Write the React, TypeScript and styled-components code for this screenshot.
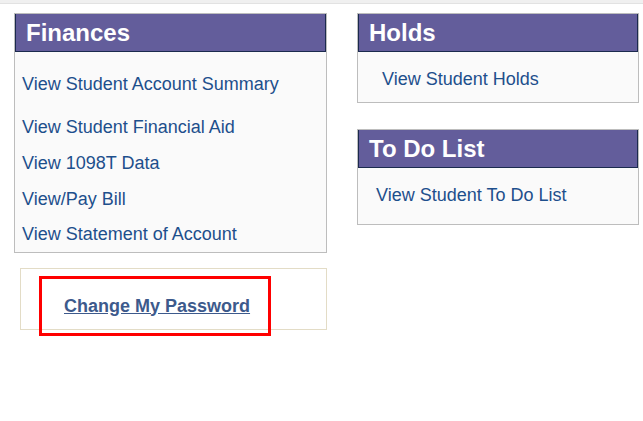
import styled, { createGlobalStyle } from 'styled-components';

const GlobalStyle = createGlobalStyle`
    body {
        margin: 0;
        background: #ffffff;
        font-family: 'Liberation Sans', Arial, sans-serif;
    }
`;

const Screen = styled.div`
    min-height: 421px;
`;

const TopStrip = styled.div`
    height: 3px;
    background: #f0f0f0;
    border-bottom: 1px solid #e2e2e2;
`;

const Page = styled.div`
    display: flex;
    align-items: flex-start;
    gap: 30px;
    padding: 9px 0 0 14px;
`;

const Column = styled.div<{ width: number; gap?: number }>`
    display: flex;
    flex-direction: column;
    width: ${props => props.width}px;
    gap: ${props => props.gap || 0}px;
`;

const Card = styled.section`
    border: 1px solid #bdbdbd;
    background: #fafafa;
`;

const CardHeader = styled.h2`
    margin: 0;
    height: 37px;
    display: flex;
    align-items: center;
    padding-left: 10px;
    background: #635d9b;
    border: 1px solid #1b2a4e;
    border-top: 0;
    color: #ffffff;
    font-size: 24px;
    font-weight: bold;
`;

const CardBody = styled.div<{ padding: string }>`
    display: flex;
    flex-direction: column;
    padding: ${props => props.padding};
`;

const Item = styled.a<{ height?: number; spaceAfter?: number }>`
    display: flex;
    align-items: center;
    height: ${props => props.height || 36}px;
    margin-bottom: ${props => props.spaceAfter || 0}px;
    color: #1d4f8c;
    font-size: 18px;
    text-decoration: none;
    cursor: pointer;
`;

const PasswordBox = styled.div`
    margin: 15px 0 0 6px;
    height: 62px;
    border: 1px solid #e3dcc6;
    display: flex;
    align-items: flex-start;
    padding: 7px 0 0 18px;
    box-sizing: border-box;
`;

// red annotation frame drawn over the password box edge
const Highlight = styled.div`
    box-sizing: border-box;
    width: 232px;
    height: 60px;
    flex-shrink: 0;
    border: 3px solid #ff0000;
    display: flex;
    align-items: center;
    padding: 0 0 0 22px;
`;

const PasswordLink = styled.a`
    color: #3d5a8c;
    font-size: 18px;
    font-weight: bold;
    text-decoration: underline;
    cursor: pointer;
`;

const financeLinks = [
    'View Student Financial Aid',
    'View 1098T Data',
    'View/Pay Bill',
    'View Statement of Account',
];

export default function App() {
    return (
        <Screen>
            <GlobalStyle />
            <TopStrip />
            <Page>
                <Column width={313}>
                    <Card>
                        <CardHeader>Finances</CardHeader>
                        <CardBody padding='14px 0 0 7px'>
                            <Item spaceAfter={7}>View Student Account Summary</Item>
                            {financeLinks.map(link => (
                                <Item key={link} height={link === 'View Statement of Account' ? 35 : 36}>
                                    {link}
                                </Item>
                            ))}
                        </CardBody>
                    </Card>
                    <PasswordBox>
                        <Highlight>
                            <PasswordLink>Change My Password</PasswordLink>
                        </Highlight>
                    </PasswordBox>
                </Column>
                <Column width={282} gap={26}>
                    <Card>
                        <CardHeader>Holds</CardHeader>
                        <CardBody padding='9px 0 5px 24px'>
                            <Item>View Student Holds</Item>
                        </CardBody>
                    </Card>
                    <Card>
                        <CardHeader>To Do List</CardHeader>
                        <CardBody padding='9px 0 11px 18px'>
                            <Item>View Student To Do List</Item>
                        </CardBody>
                    </Card>
                </Column>
            </Page>
        </Screen>
    );
}
